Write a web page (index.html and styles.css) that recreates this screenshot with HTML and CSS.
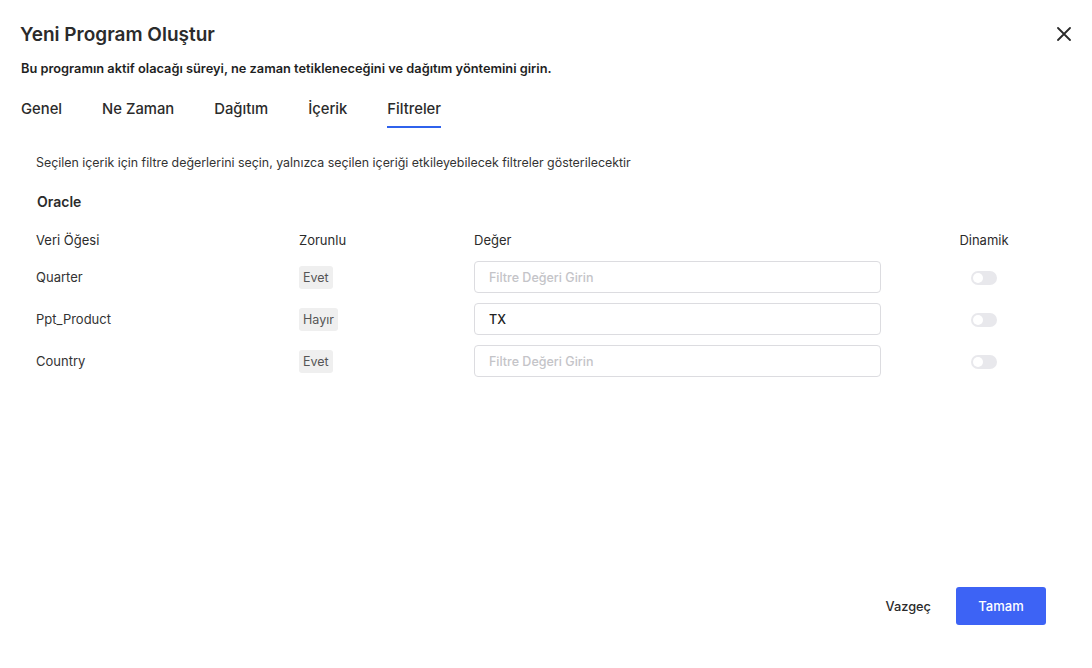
FILE: index.html
```html
<!DOCTYPE html>
<html lang="tr">
<head>
    <meta charset="UTF-8">
    <meta name="viewport" content="width=device-width, initial-scale=1.0">
    <title>Yeni Program Oluştur</title>
    <link rel="stylesheet" href="styles.css">
</head>
<body>
<div class="modal">
    <div class="modal-header">
        <h1>Yeni Program Oluştur</h1>
        <button class="close-button" aria-label="Kapat">
            <svg width="14" height="14" viewBox="0 0 14 14"><path d="M1 1L13 13M13 1L1 13" stroke="#2b2b2b" stroke-width="1.8" stroke-linecap="round"/></svg>
        </button>
    </div>
    <p class="subtitle">Bu programın aktif olacağı süreyi, ne zaman tetikleneceğini ve dağıtım yöntemini girin.</p>

    <div class="tabs">
        <button class="tab-button">Genel</button>
        <button class="tab-button">Ne Zaman</button>
        <button class="tab-button">Dağıtım</button>
        <button class="tab-button">İçerik</button>
        <button class="tab-button active">Filtreler</button>
    </div>

    <div class="tab-content">
        <p class="description">Seçilen içerik için filtre değerlerini seçin, yalnızca seçilen içeriği etkileyebilecek filtreler gösterilecektir</p>
        <h2>Oracle</h2>

        <div class="filter-table">
            <div class="filter-row head">
                <div>Veri Öğesi</div>
                <div>Zorunlu</div>
                <div>Değer</div>
                <div></div>
                <div class="col-toggle">Dinamik</div>
            </div>
            <div class="filter-row">
                <div>Quarter</div>
                <div><span class="badge">Evet</span></div>
                <div><input type="text" placeholder="Filtre Değeri Girin"></div>
                <div></div>
                <div class="col-toggle"><span class="toggle"></span></div>
            </div>
            <div class="filter-row">
                <div>Ppt_Product</div>
                <div><span class="badge">Hayır</span></div>
                <div><input type="text" value="TX" placeholder="Filtre Değeri Girin"></div>
                <div></div>
                <div class="col-toggle"><span class="toggle"></span></div>
            </div>
            <div class="filter-row">
                <div>Country</div>
                <div><span class="badge">Evet</span></div>
                <div><input type="text" placeholder="Filtre Değeri Girin"></div>
                <div></div>
                <div class="col-toggle"><span class="toggle"></span></div>
            </div>
        </div>
    </div>

    <div class="modal-footer">
        <button class="link-button">Vazgeç</button>
        <button class="primary-button">Tamam</button>
    </div>
</div>
</body>
</html>
```

FILE: styles.css
```css
* {
    box-sizing: border-box;
}

body {
    font-family: "Inter", "Noto Sans", sans-serif;
    background-color: #ffffff;
    color: #2b2b2b;
    margin: 0;
    padding: 0;
}

.modal {
    height: 668px;
    padding: 20px 22px 43px 20px;
    display: flex;
    flex-direction: column;
}

.modal-header {
    display: flex;
    justify-content: space-between;
    align-items: center;
    height: 28px;
}

h1 {
    margin: 0;
    font-size: 19px;
    font-weight: 600;
    color: #2b2b2b;
}

.close-button {
    background: none;
    border: none;
    padding: 0;
    margin-right: -1px;
    cursor: pointer;
    display: flex;
}

.subtitle {
    margin: 13px 0 0 1px;
    font-size: 12.8px;
    font-weight: 600;
    color: #1f1f1f;
}

.tabs {
    display: flex;
    gap: 40px;
    margin-top: 16px;
    padding-left: 1px;
}

.tab-button {
    background: none;
    border: none;
    padding: 8px 0 8px;
    font-family: inherit;
    font-size: 14.8px;
    font-weight: 500;
    color: #2b2b2b;
    border-bottom: 2px solid transparent;
    cursor: pointer;
}

.tab-button.active {
    border-bottom-color: #2f62ec;
}

.tab-content {
    padding: 0 16px;
    flex: 1;
}

.description {
    margin: 27px 0 0;
    font-size: 12.4px;
    color: #333333;
}

h2 {
    margin: 23px 0 0 1px;
    font-size: 14px;
    font-weight: 600;
    color: #2b2b2b;
}

.filter-table {
    margin-top: 20px;
    padding-right: 40px;
}

.filter-row {
    display: grid;
    grid-template-columns: 263px 175px 407px 1fr 60px;
    align-items: center;
    height: 42px;
    font-size: 13px;
    color: #333333;
}

.filter-row.head {
    height: 26px;
    align-items: start;
    padding-top: 2px;
    color: #2b2b2b;
}

.col-toggle {
    text-align: center;
}

.badge {
    display: inline-block;
    background-color: #efefef;
    color: #555555;
    border-radius: 3px;
    padding: 4px 4px;
    font-size: 12.5px;
}

input {
    width: 100%;
    height: 32px;
    border: 1px solid #dcdce0;
    border-radius: 4px;
    padding: 0 14px;
    font-family: inherit;
    font-size: 12.5px;
    font-weight: 500;
    color: #222222;
    background-color: #ffffff;
}

input::placeholder {
    color: #c4c4c8;
}

.toggle {
    display: inline-block;
    position: relative;
    width: 26px;
    height: 14px;
    border-radius: 7px;
    background-color: #e8e8ec;
    vertical-align: middle;
}

.toggle::after {
    content: "";
    position: absolute;
    left: 2px;
    top: 2px;
    width: 10px;
    height: 10px;
    border-radius: 50%;
    background-color: #ffffff;
}

.modal-footer {
    display: flex;
    justify-content: flex-end;
    align-items: center;
    gap: 25px;
    padding-right: 24px;
}

.link-button {
    background: none;
    border: none;
    padding: 0;
    font-family: inherit;
    font-size: 12.8px;
    font-weight: 500;
    color: #2b2b2b;
    cursor: pointer;
}

.primary-button {
    width: 90px;
    height: 38px;
    background-color: #3d63f5;
    color: #ffffff;
    border: none;
    border-radius: 3px;
    font-family: inherit;
    font-size: 13px;
    font-weight: 500;
    cursor: pointer;
}
```
